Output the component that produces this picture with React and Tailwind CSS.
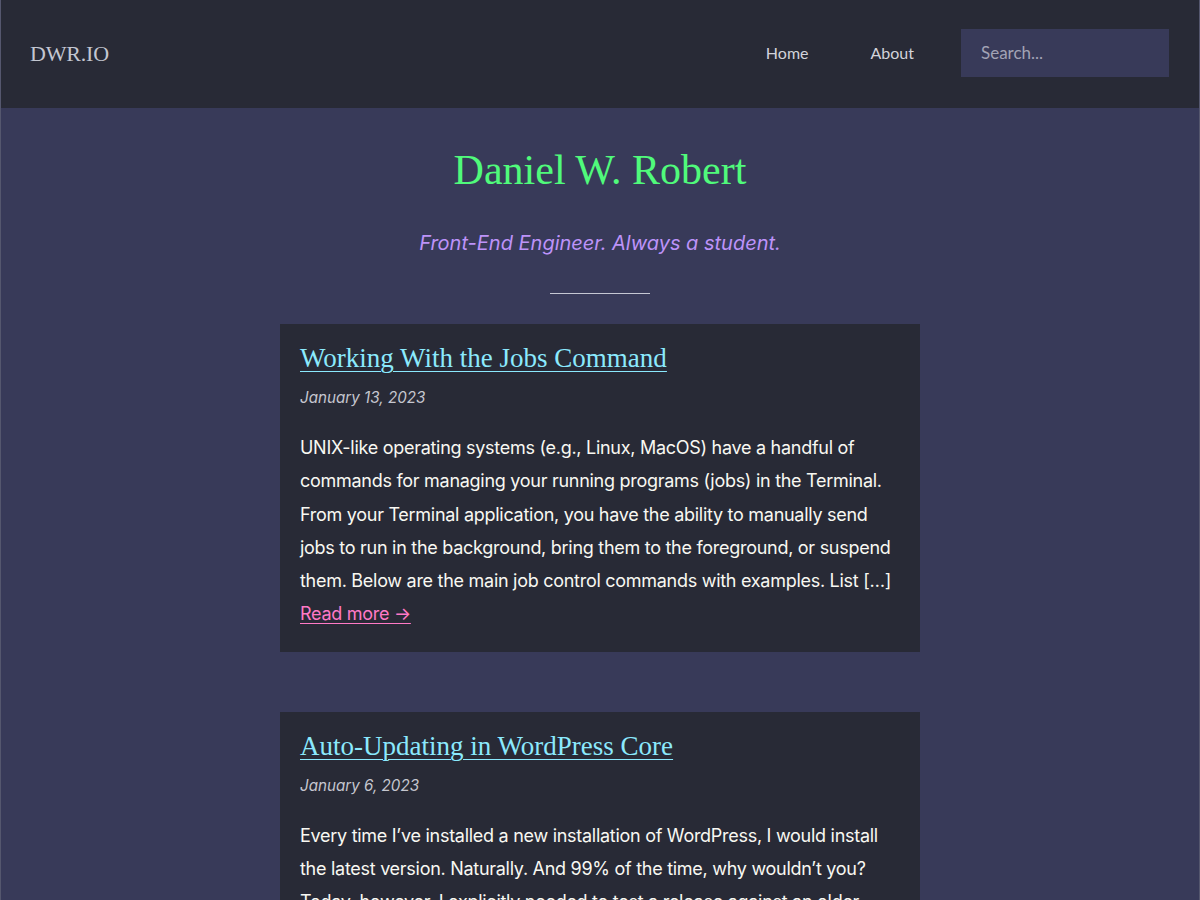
import React from "react";

const serif = { fontFamily: '"Liberation Serif", "Times New Roman", serif' };

function Post({ title, date, body }) {
  return (
    <article className="w-[640px] bg-[#282a36] px-5 pt-4 pb-[21px]">
      <h2 className="text-[27px] leading-[36px] text-[#8be9fd] underline decoration-1 underline-offset-[4px]" style={serif}>
        <a href="#">{title}</a>
      </h2>
      <p className="mt-[10px] text-[15.2px] leading-[24px] italic text-[#c5c6cf]">{date}</p>
      <p className="mt-[21px] text-[18px] leading-[33.3px] tracking-[-0.28px] text-[#f8f8f2]">{body}</p>
      <a href="#" className="block text-[18px] leading-[33.3px] tracking-[-0.28px] text-[#ff79c6] underline decoration-1 underline-offset-[3px]">
        Read more →
      </a>
    </article>
  );
}

export default function App() {
  return (
    <div
      className="min-h-[900px] w-full bg-[#383a59] border-x border-[#55576e]"
      style={{ fontFamily: 'Inter, "Noto Sans", sans-serif' }}
    >
      <header className="h-[108px] bg-[#282a36] flex items-center justify-between pl-[29px] pr-[30px] pb-[2px]">
        <a href="#" className="text-[22px] text-[#c3c6d1] tracking-[-0.2px]" style={serif}>
          DWR.IO
        </a>
        <nav className="flex items-center" style={{ fontFamily: 'Lato, "Open Sans", sans-serif' }}>
          <a href="#" className="text-[16px] text-[#d2d3da] mr-[62px]">Home</a>
          <a href="#" className="text-[16px] text-[#d2d3da] mr-[47px]">About</a>
          <div className="w-[208px] h-[48px] bg-[#383a59] flex items-center px-5">
            <span className="text-[17px] text-[#a2a3b5]">Search...</span>
          </div>
        </nav>
      </header>
      <main className="flex flex-col items-center">
        <h1 className="mt-[38px] text-[42px] leading-[48px] text-[#50fa7b]" style={serif}>
          Daniel W. Robert
        </h1>
        <p className="mt-[35px] text-[20px] leading-[28px] italic text-[#bd93f9]">
          Front-End Engineer. Always a student.
        </p>
        <div className="mt-[36px] w-[100px] h-px bg-[#c5c7d3]" />
        <div className="mt-[30px] flex flex-col gap-[60px]">
          <Post
            title="Working With the Jobs Command"
            date="January 13, 2023"
            body="UNIX-like operating systems (e.g., Linux, MacOS) have a handful of commands for managing your running programs (jobs) in the Terminal. From your Terminal application, you have the ability to manually send jobs to run in the background, bring them to the foreground, or suspend them. Below are the main job control commands with examples. List […]"
          />
          <Post
            title="Auto-Updating in WordPress Core"
            date="January 6, 2023"
            body="Every time I’ve installed a new installation of WordPress, I would install the latest version. Naturally. And 99% of the time, why wouldn’t you? Today, however, I explicitly needed to test a release against an older version of WordPress and noticed something odd. […]"
          />
        </div>
      </main>
    </div>
  );
}
